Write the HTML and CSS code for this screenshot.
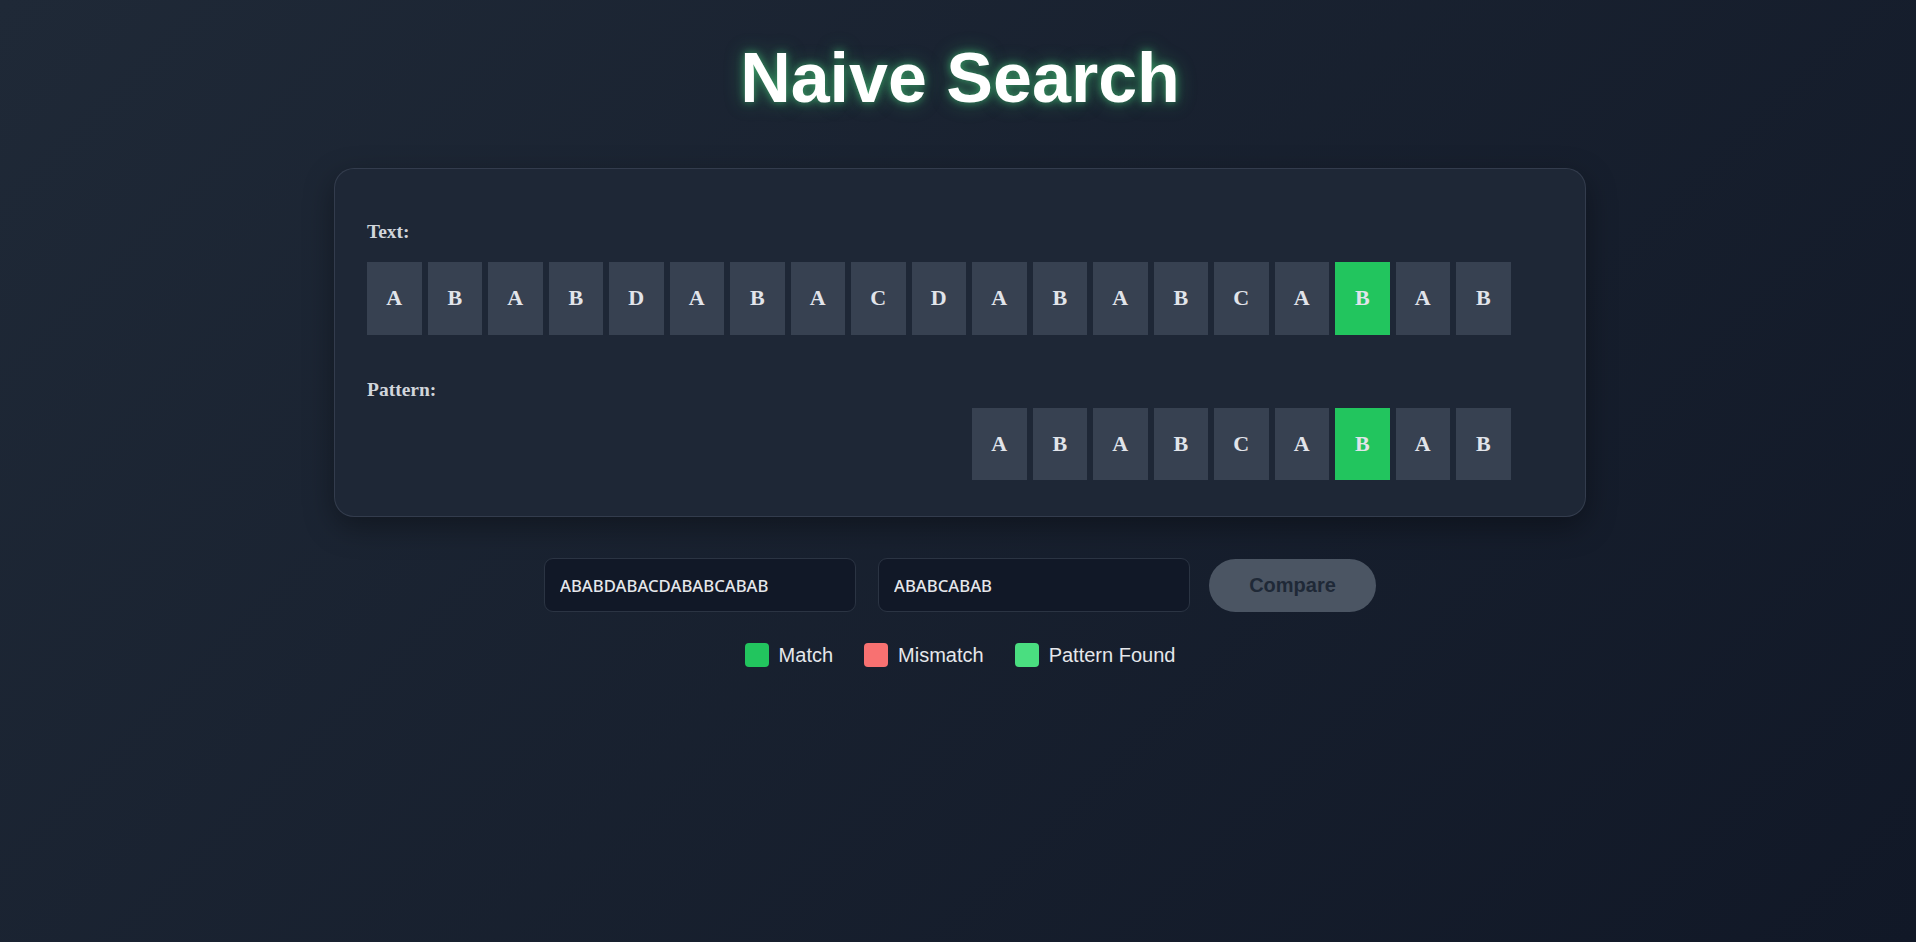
FILE: index.html
```html
<!DOCTYPE html>
<html lang="en">
<head>
<meta charset="utf-8">
<title>Naive Search</title>
<link rel="stylesheet" href="styles.css">
</head>
<body>
<main class="page">
  <h1 class="title">Naive Search</h1>
  <section class="card">
    <div class="section">
      <div class="label">Text:</div>
      <div class="cells">
        <div class="cell">A</div><div class="cell">B</div><div class="cell">A</div><div class="cell">B</div><div class="cell">D</div><div class="cell">A</div><div class="cell">B</div><div class="cell">A</div><div class="cell">C</div><div class="cell">D</div><div class="cell">A</div><div class="cell">B</div><div class="cell">A</div><div class="cell">B</div><div class="cell">C</div><div class="cell">A</div><div class="cell match">B</div><div class="cell">A</div><div class="cell">B</div>
      </div>
    </div>
    <div class="section pattern-section">
      <div class="label">Pattern:</div>
      <div class="cells" style="margin-left: calc(10 * 60.5px)">
        <div class="cell">A</div><div class="cell">B</div><div class="cell">A</div><div class="cell">B</div><div class="cell">C</div><div class="cell">A</div><div class="cell match">B</div><div class="cell">A</div><div class="cell">B</div>
      </div>
    </div>
  </section>
  <div class="controls">
    <input class="field" type="text" value="ABABDABACDABABCABAB">
    <input class="field" type="text" value="ABABCABAB">
    <button class="btn" type="button">Compare</button>
  </div>
  <div class="legend">
    <div class="legend-item"><span class="swatch swatch-match"></span>Match</div>
    <div class="legend-item"><span class="swatch swatch-mismatch"></span>Mismatch</div>
    <div class="legend-item"><span class="swatch swatch-found"></span>Pattern Found</div>
  </div>
</main>
</body>
</html>
```
FILE: styles.css
```css
html, body {
  margin: 0;
  height: 100%;
}
body {
  background: linear-gradient(135deg, #1f2937 0%, #111827 100%);
  font-family: "Liberation Sans", Arial, sans-serif;
  color: #e5e7eb;
  padding-left: 4px;
  box-sizing: border-box;
  overflow: hidden;
}
.page {
  display: flex;
  flex-direction: column;
  align-items: center;
  padding-top: 39px;
}
.title {
  margin: 0;
  font-size: 70px;
  font-weight: 700;
  line-height: 79px;
  color: #ffffff;
  text-shadow: 0 0 8px rgba(74, 222, 128, 0.6), 0 0 20px rgba(74, 222, 128, 0.35);
}
.card {
  margin-top: 50px;
  width: 1252px;
  box-sizing: border-box;
  padding: 32px 32px 36px;
  background: #1e2736;
  border: 1px solid rgba(148, 163, 184, 0.18);
  border-radius: 20px;
  box-shadow: 0 10px 30px rgba(0, 0, 0, 0.35);
  font-family: "Liberation Serif", "Times New Roman", serif;
}
.section {
  display: flex;
  flex-direction: column;
}
.label {
  margin: 20px 0 19px;
  font-size: 19.5px;
  line-height: 22px;
  font-weight: 700;
  color: #d1d5db;
}
.pattern-section .label {
  margin: 44px 0 7px;
}
.cells {
  display: flex;
  gap: 6px;
}
.cell {
  width: 54.5px;
  height: 72.6px;
  flex: none;
  display: flex;
  align-items: center;
  justify-content: center;
  background: #374151;
  color: #e1e4ea;
  font-size: 22px;
  font-weight: 700;
}
.cell.match {
  background: #22c55e;
}
.controls {
  margin-top: 41px;
  display: flex;
  align-items: center;
  gap: 22px;
}
.field {
  width: 312px;
  height: 54px;
  box-sizing: border-box;
  padding: 0 15px;
  background: #111827;
  border: 1px solid #2b3443;
  border-radius: 9px;
  color: #e5e7eb;
  font-family: "Noto Sans", "Open Sans", sans-serif;
  font-size: 16.7px;
  font-weight: 500;
  outline: none;
}
.btn {
  margin-left: -3px;
  width: 167px;
  height: 53px;
  border: none;
  border-radius: 27px;
  background: #4b5563;
  color: #1f2937;
  font-family: "Liberation Sans", Arial, sans-serif;
  font-size: 20px;
  font-weight: 700;
}
.legend {
  margin-top: 31px;
  display: flex;
  align-items: center;
  gap: 31px;
}
.legend-item {
  display: flex;
  align-items: center;
  gap: 10px;
  font-size: 20px;
  color: #e5e7eb;
}
.swatch {
  width: 24px;
  height: 24px;
  border-radius: 4px;
  display: inline-block;
}
.swatch-match { background: #22c55e; }
.swatch-mismatch { background: #f87171; }
.swatch-found { background: #4ade80; }
```
